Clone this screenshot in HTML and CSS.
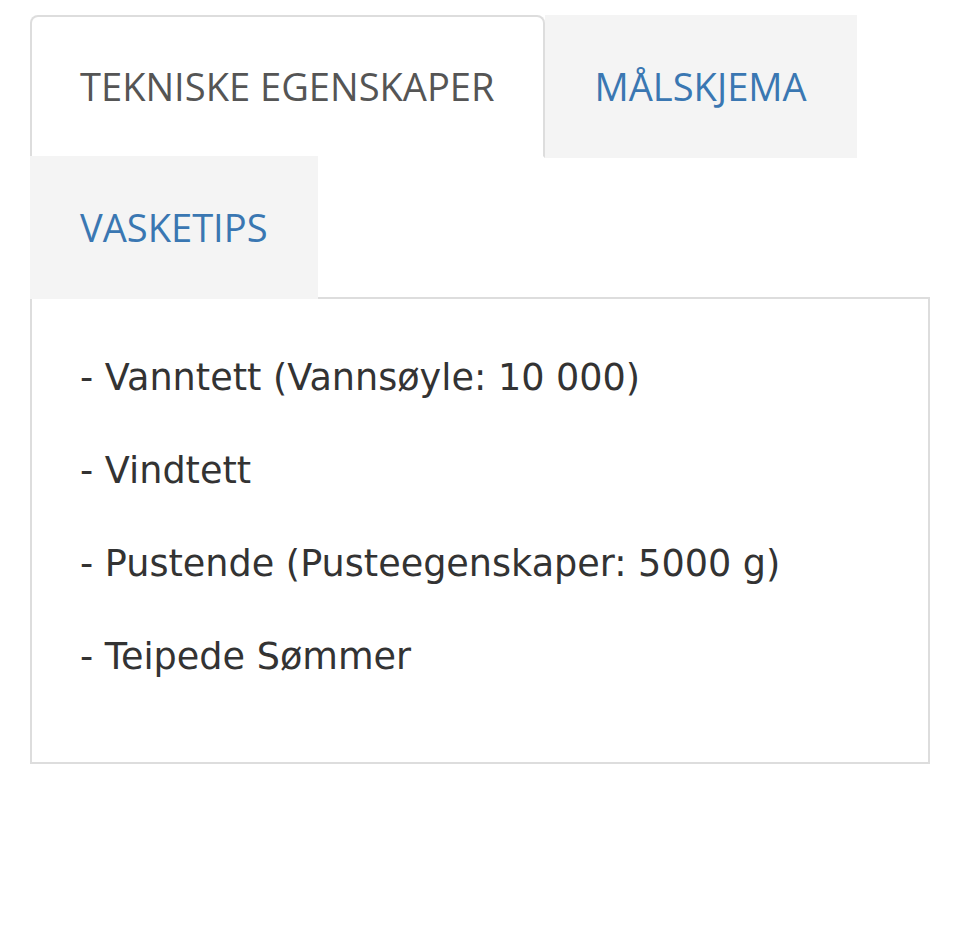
FILE: index.html
```html
<!DOCTYPE html>
<html lang="no">
<head>
<meta charset="utf-8">
<title>Produktinfo</title>
<link rel="stylesheet" href="styles.css">
</head>
<body>
<div class="product-tabs">
  <ul class="tabs">
    <li class="tab active"><a href="#tekniske">TEKNISKE EGENSKAPER</a></li>
    <li class="tab"><a href="#malskjema">MÅLSKJEMA</a></li>
    <li class="tab"><a href="#vasketips">VASKETIPS</a></li>
  </ul>
  <div class="panel" id="tekniske">
    <p>- Vanntett (Vannsøyle: 10 000)</p>
    <p>- Vindtett</p>
    <p>- Pustende (Pusteegenskaper: 5000 g)</p>
    <p>- Teipede Sømmer</p>
  </div>
</div>
</body>
</html>
```

FILE: styles.css
```css
html, body {
  margin: 0;
  padding: 0;
  background: #fff;
}

.product-tabs {
  width: 900px;
  padding: 15px 0 0 30px;
}

.tabs {
  display: flex;
  flex-wrap: wrap;
  list-style: none;
  margin: 0;
  padding: 0;
}

.tab {
  margin-bottom: -2px;
  position: relative;
}

.tab a {
  display: block;
  padding: 0 48px;
  height: 139px;
  line-height: 139px;
  border: 2px solid transparent;
  background: #f4f4f4;
  color: #3a77b2;
  text-decoration: none;
  font-family: "Open Sans", sans-serif;
  font-size: 38.1px;
  white-space: nowrap;
}

.tab.active a {
  background: #fff;
  color: #555;
  border-color: #ddd;
  border-bottom-color: transparent;
  border-radius: 8px 8px 0 0;
  background-clip: padding-box;
}

.panel {
  border: 2px solid #ddd;
  padding: 56px 48px 35px;
  font-family: "DejaVu Sans", Verdana, sans-serif;
  font-size: 36.6px;
  line-height: 45px;
  color: #333;
}

.panel p {
  margin: 0 0 48px;
}
```
